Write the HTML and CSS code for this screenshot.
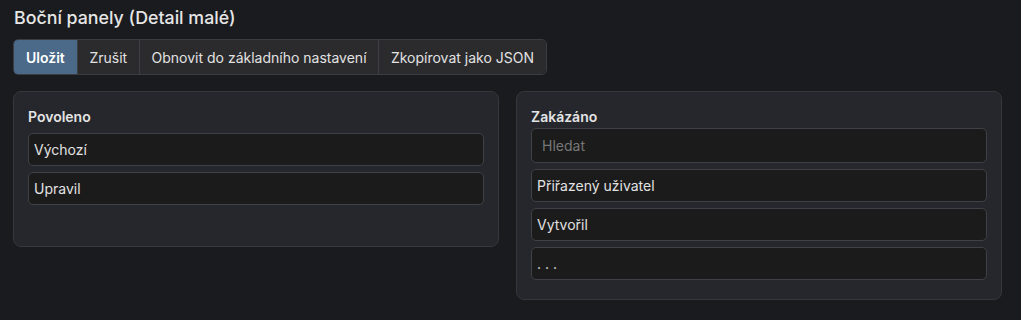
FILE: index.html
```html
<!DOCTYPE html>
<html lang="cs">
<head>
    <meta charset="UTF-8">
    <meta name="viewport" content="width=device-width, initial-scale=1.0">
    <title>Boční panely</title>
    <link rel="stylesheet" href="styles.css">
</head>
<body>
    <div class="page">
        <h4 class="page-title">Boční panely (Detail malé)</h4>

        <!-- Toolbar -->
        <div class="btn-group">
            <button class="btn btn-primary">Uložit</button>
            <button class="btn">Zrušit</button>
            <button class="btn">Obnovit do základního nastavení</button>
            <button class="btn">Zkopírovat jako JSON</button>
        </div>

        <!-- Panels -->
        <div class="panels">
            <div class="panel panel-enabled">
                <div class="panel-label">Povoleno</div>
                <ul class="item-list enabled-list">
                    <li class="item">Výchozí</li>
                    <li class="item">Upravil</li>
                </ul>
            </div>
            <div class="panel">
                <div class="panel-label">Zakázáno</div>
                <input class="search" type="text" placeholder="Hledat">
                <ul class="item-list">
                    <li class="item">Přiřazený uživatel</li>
                    <li class="item">Vytvořil</li>
                    <li class="item">. . .</li>
                </ul>
            </div>
        </div>
    </div>
</body>
</html>
```

FILE: styles.css
```css
/* Global */
body {
    margin: 0;
    padding: 0;
    background-color: #1a1b1f;
    color: #e2e2e2;
    font-family: Inter, "Noto Sans", sans-serif;
    font-size: 14px;
}
.page {
    padding: 8px 13px;
    width: 989px;
}
.page-title {
    margin: 0 0 11px 1px;
    font-size: 17.8px;
    font-weight: 500;
    color: #e6e6e6;
    line-height: 20px;
}

/* Button group */
.btn-group {
    display: inline-flex;
    border: 1px solid #3a3c41;
    border-radius: 5px;
    overflow: hidden;
}
.btn {
    font-family: inherit;
    font-size: 14px;
    color: #e2e2e2;
    background-color: #2b2b2d;
    border: none;
    border-left: 1px solid #3e3f43;
    padding: 0 11.7px;
    height: 34px;
    cursor: pointer;
}
.btn:first-child {
    border-left: none;
}
.btn-primary {
    background-color: #4b6a89;
    color: #fff;
    font-weight: 600;
    padding: 0 12px;
}

/* Panels */
.panels {
    display: grid;
    grid-template-columns: 1fr 1fr;
    gap: 17px;
    align-items: start;
    margin-top: 16px;
}
.panel {
    background-color: #25272c;
    border: 1px solid #35373c;
    border-radius: 8px;
    padding: 16px 14px 19px;
}
.panel-enabled {
    min-height: 119px;
}
.panel-label {
    font-weight: 600;
    color: #e4e4e4;
    line-height: 18px;
    margin-bottom: 2px;
}
.item-list {
    list-style: none;
    margin: 0;
    padding: 0;
    display: flex;
    flex-direction: column;
    gap: 6px;
}
.enabled-list {
    padding-top: 5px;
}
.item {
    background-color: #1b1b1b;
    border: 1px solid #3f4146;
    border-radius: 5px;
    height: 31px;
    line-height: 31px;
    padding: 0 5px;
    color: #e2e2e2;
}
.search {
    display: block;
    box-sizing: border-box;
    width: 100%;
    height: 35px;
    margin-bottom: 6px;
    background-color: #1b1b1b;
    border: 1px solid #3f4146;
    border-radius: 5px;
    padding: 0 10px;
    font-family: inherit;
    font-size: 14px;
    color: #e2e2e2;
}
.search::placeholder {
    color: #777;
}
```
